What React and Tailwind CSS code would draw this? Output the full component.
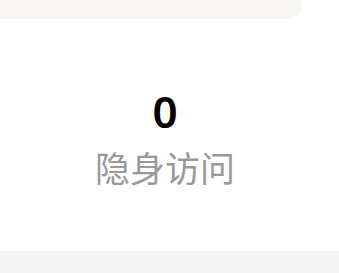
export default function App() {
  return (
    <div className="w-[339px] h-[273px] bg-white flex flex-col overflow-hidden" style={{fontFamily: '"Noto Sans", "Noto Sans CJK SC", sans-serif'}}>
      <div className="h-[19px] w-[302px] bg-[#f7f6f2] rounded-br-[14px] shrink-0" />
      <div className="flex-1 flex flex-col items-center pr-[9px]">
        <div className="mt-[70px] text-[44px] leading-[44px] font-semibold text-black">0</div>
        <div className="mt-[14px] text-[35px] leading-[40px] text-[#999999]" style={{fontFamily: '"Noto Sans CJK SC", sans-serif'}}>隐身访问</div>
      </div>
      <div className="h-[22px] bg-[#f5f5f5] shrink-0" />
    </div>
  );
}
